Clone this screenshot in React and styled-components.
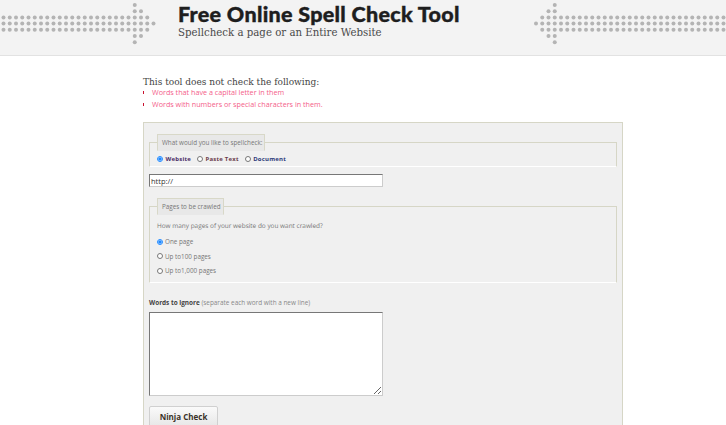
import React from 'react';
import styled, { createGlobalStyle } from 'styled-components';

const GlobalStyle = createGlobalStyle`
  html, body {
    margin: 0;
    height: 425px;
    overflow: hidden;
    background: #fff;
    font-family: 'Open Sans', sans-serif;
  }
  * { box-sizing: border-box; }
`;

const Header = styled.header`
  display: flex;
  height: 56px;
  background: #f3f3f3;
  border-bottom: 1px solid #e2e2e2;
  overflow: hidden;
`;

const TitleBlock = styled.div`
  flex: 1;
  padding: 0 0 0 22px;
`;

const Title = styled.h1`
  margin: 2px 0 0;
  font-family: 'Lato', sans-serif;
  font-size: 21.5px;
  line-height: 24px;
  font-weight: 900;
  letter-spacing: 0.3px;
  color: #1e1e1e;
  -webkit-text-stroke: 0.4px #1e1e1e;
`;

const Subtitle = styled.p`
  margin: 0;
  font-family: 'DejaVu Serif', serif;
  font-size: 10.2px;
  line-height: 14px;
  color: #4a4a4a;
`;

const Main = styled.main`
  width: 480px;
  margin-left: 143px;
`;

const Intro = styled.p`
  margin: 20px 0 0;
  font-family: 'DejaVu Serif', serif;
  font-size: 9px;
  line-height: 13px;
  color: #444;
`;

const Rules = styled.ul`
  margin: -3px 0 0;
  padding: 0;
  list-style: none;
`;

const Rule = styled.li`
  display: flex;
  align-items: center;
  height: 12px;
  font-size: 7.2px;
  color: #f4608a;

  &::before {
    content: '';
    width: 1px;
    height: 3px;
    margin-right: 8px;
    background: #c8102e;
  }
`;

const Panel = styled.form`
  margin-top: 12px;
  height: 320px;
  padding: 11px 5px 0;
  background: #f0f0f0;
  border: 1px solid #d6d6c6;
  border-bottom: 0;
`;

const Group = styled.fieldset`
  margin: 0;
  min-width: 0;
  height: ${(p) => p.$height}px;
  padding: ${(p) => p.$padding};
  border: 1px solid #d6d6c6;
  border-bottom: 1px solid #fff;
`;

const Legend = styled.legend`
  height: 17px;
  margin-left: 0;
  padding: 0 2px 0 4px;
  font-size: ${(p) => p.$size}px;
  line-height: 16px;
  color: #777;
  background: #e8e8e8;
  border: 1px solid #d8d8c8;
  border-bottom-color: #e8e8e8;
`;

const TypeRow = styled.div`
  display: flex;
  align-items: center;
  gap: 6px;
`;

const Radio = styled.input.attrs({ type: 'radio' })`
  width: 6px;
  height: 6px;
  margin: 0;
  accent-color: #1e88ff;
`;

const TypeOption = styled.label`
  display: flex;
  align-items: center;
  gap: 2.5px;
  font-size: 6px;
  font-weight: 700;
  letter-spacing: 0.2px;
  color: ${(p) => p.$color};
`;

const TextField = styled.input`
  display: block;
  width: 234px;
  height: 13px;
  margin: 7px 0 11px;
  padding: 0 1px;
  font-family: 'Open Sans', sans-serif;
  font-size: 7.5px;
  color: #333;
  background: #fff;
  border: 1px solid;
  border-color: #777 #ccc #ccc #777;
`;

const Question = styled.p`
  margin: 0 0 7px;
  font-size: 6.45px;
  text-rendering: geometricPrecision;
  line-height: 10px;
  color: #777;
`;

const PageOption = styled.label`
  display: flex;
  align-items: center;
  gap: 2px;
  height: 7px;
  margin-bottom: 7.5px;
  font-size: 6.3px;
  color: #777;
`;

const IgnoreLabel = styled.div`
  margin: 15px 0 5px;
  font-size: 6.4px;
  line-height: 9px;
  font-weight: 700;
  color: #444;

  & > span {
    font-weight: 400;
    color: #888;
  }
`;

const IgnoreBox = styled.textarea`
  display: block;
  width: 234px;
  height: 84px;
  margin: 0;
  background: #fff;
  border: 1px solid;
  border-color: #777 #ccc #ccc #777;
`;

const CheckButton = styled.button`
  display: block;
  width: 69px;
  height: 24px;
  margin-top: 10px;
  padding: 0 0 3px;
  font-family: 'Open Sans', sans-serif;
  font-size: 8px;
  font-weight: 700;
  color: #3a3228;
  background: linear-gradient(#fafafa, #e4e4e4);
  border: 1px solid #d0d0d0;
  border-radius: 2px;
`;

// one dot arrow, cols grow away from the tip
const ArrowDots = ({ width, tipX, step, flip }) => {
  const rows = [5, 11.2, 17.4, 23.6, 29.8, 36, 42.2];
  const dots = [];
  rows.forEach((y, r) => {
    const off = Math.abs(r - 3);
    if (off === 3) {
      dots.push([3, y]);
    } else if (off === 2) {
      dots.push([2, y], [3, y]);
    } else {
      const start = off === 0 ? 0 : 1;
      for (let c = start; c * step < width + 10; c++) dots.push([c, y]);
    }
  });
  return (
    <svg width={width} height={55} style={{ flexShrink: 0, display: 'block' }}>
      {dots.map(([c, y], i) => (
        <circle
          key={i}
          cx={flip ? tipX - c * step : tipX + c * step}
          cy={y}
          r={2}
          fill="#b4b4b4"
        />
      ))}
    </svg>
  );
};

const App = () => {
  return (
    <>
      <GlobalStyle />
      <Header>
        <ArrowDots width={156} tipX={153.5} step={6.25} flip />
        <TitleBlock>
          <Title>Free Online Spell Check Tool</Title>
          <Subtitle>Spellcheck a page or an Entire Website</Subtitle>
        </TitleBlock>
        <ArrowDots width={193} tipX={3} step={6.25} />
      </Header>
      <Main>
        <Intro>This tool does not check the following:</Intro>
        <Rules>
          <Rule>Words that have a capital letter in them</Rule>
          <Rule>Words with numbers or special characters in them.</Rule>
        </Rules>
        <Panel>
          <Group $height={33} $padding="4px 7px 0">
            <Legend $size={6.3}>What would you like to spellcheck:</Legend>
            <TypeRow>
              <TypeOption $color="#4a2c66">
                <Radio name="type" defaultChecked />
                Website
              </TypeOption>
              <TypeOption $color="#6a3a4a">
                <Radio name="type" />
                Paste Text
              </TypeOption>
              <TypeOption $color="#2c3a7a">
                <Radio name="type" />
                Document
              </TypeOption>
            </TypeRow>
          </Group>
          <TextField defaultValue="http://" />
          <Group $height={85} $padding="6px 7px 0">
            <Legend $size={6.3}>Pages to be crawled</Legend>
            <Question>How many pages of your website do you want crawled?</Question>
            <PageOption>
              <Radio name="pages" defaultChecked />
              One page
            </PageOption>
            <PageOption>
              <Radio name="pages" />
              Up to100 pages
            </PageOption>
            <PageOption>
              <Radio name="pages" />
              Up to1,000 pages
            </PageOption>
          </Group>
          <IgnoreLabel>
            Words to ignore <span>(separate each word with a new line)</span>
          </IgnoreLabel>
          <IgnoreBox />
          <CheckButton type="button">Ninja Check</CheckButton>
        </Panel>
      </Main>
    </>
  );
};

export default App;
